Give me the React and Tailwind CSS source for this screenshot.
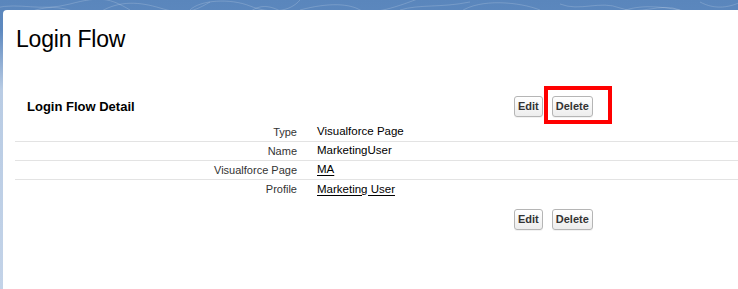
const rows = [
  { label: 'Type', value: 'Visualforce Page' },
  { label: 'Name', value: 'MarketingUser' },
  { label: 'Visualforce Page', value: 'MA', link: true },
  { label: 'Profile', value: 'Marketing User', link: true, last: true },
];

const Btn = ({ children }) => (
  <button className="block h-[21px] px-[3px] rounded-[3px] border border-[#b5b5b5] bg-[linear-gradient(to_bottom,#ffffff,#ededed)] text-[11px] font-bold text-[#333] leading-none shadow-[0_1px_0_rgba(0,0,0,0.05)]">
    {children}
  </button>
);

const Topo = () => (
  <svg className="absolute inset-0 w-full h-[40px]" viewBox="0 0 738 40" preserveAspectRatio="none" fill="none" stroke="rgba(255,255,255,0.22)" strokeWidth="0.8">
    <path d="M-5 8 C 20 2, 40 12, 70 4 S 110 -2, 130 10" />
    <path d="M100 12 C 120 0, 140 2, 160 8 S 190 14, 210 2" />
    <path d="M190 10 C 200 0, 230 -2, 250 6 S 290 12, 300 0" />
    <path d="M300 10 C 330 2, 350 4, 360 10 S 400 6, 420 -2" />
    <path d="M400 10 C 420 4, 440 8, 470 2" />
    <path d="M460 12 C 480 -2, 520 2, 540 10" />
    <path d="M560 4 C 580 12, 600 0, 620 8 S 660 2, 680 10" />
    <path d="M700 2 C 715 10, 730 8, 745 0" />
    <path d="M30 12 C 45 6, 60 6, 75 12" />
    <path d="M250 12 C 262 2, 275 8, 282 12" />
    <path d="M620 12 C 640 4, 660 6, 690 12" />
  </svg>
);

export default function App() {
  return (
    <div className="relative w-[738px] h-[289px] overflow-hidden bg-[linear-gradient(to_bottom,#5a86bc_0px,#5e89bf_30px,#b9cce4_90px,#c3d3e8_289px)] font-['Liberation_Sans',Arial,sans-serif]">
      <Topo />
      <div className="relative ml-[3px] mt-[10px] h-[279px] rounded-tl-[4px] bg-white">
        <h1 className="pl-[13px] pt-[15px] text-[23px] leading-[28px] text-black tracking-[-0.2px]">Login Flow</h1>

        <div className="mt-[43px] pl-[12px]">
          <div className="flex items-center h-[21px]">
            <h2 className="w-[499px] pl-[12px] text-[13px] font-bold text-black">Login Flow Detail</h2>
            <div className="flex items-start gap-[9px]">
              <Btn>Edit</Btn>
              <div className="relative">
                <Btn>Delete</Btn>
                <div className="absolute left-[-8px] top-[-10px] w-[68px] h-[38px] border-[4px] border-[#ff0000]" />
              </div>
            </div>
          </div>

          <div className="mt-[6px]">
            {rows.map((r) => (
              <div
                key={r.label}
                className={`flex items-center h-[19px] ${r.last ? '' : 'border-b border-[#e3e3e3]'}`}
              >
                <div className="w-[282px] text-right text-[11px] text-[#333]">{r.label}</div>
                <div className={`pl-[20px] text-[11.5px] text-black ${r.link ? 'underline underline-offset-[2px]' : ''}`}>{r.value}</div>
              </div>
            ))}
          </div>

          <div className="flex items-start gap-[9px] mt-[10px] ml-[499px]">
            <Btn>Edit</Btn>
            <Btn>Delete</Btn>
          </div>
        </div>
      </div>
    </div>
  );
}
